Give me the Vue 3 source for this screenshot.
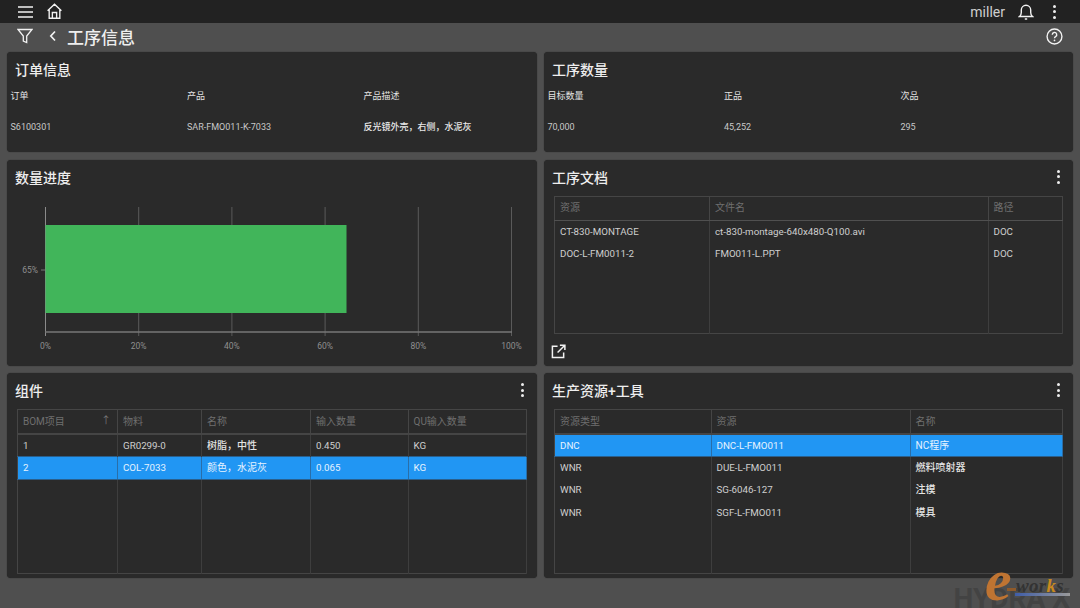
<script setup>
const orderInfo = [
  { label: '订单', value: 'S6100301' },
  { label: '产品', value: 'SAR-FMO011-K-7033' },
  { label: '产品描述', value: '反光镜外壳，右侧，水泥灰', cjk: true }
]

const qtyInfo = [
  { label: '目标数量', value: '70,000' },
  { label: '正品', value: '45,252' },
  { label: '次品', value: '295' }
]

const docTable = {
  cols: [155, 278.5, 74],
  head: ['资源', '文件名', '路径'],
  rows: [
    { cells: ['CT-830-MONTAGE', 'ct-830-montage-640x480-Q100.avi', 'DOC'] },
    { cells: ['DOC-L-FM0011-2', 'FMO011-L.PPT', 'DOC'] }
  ]
}

const bomTable = {
  cols: [100, 84, 109, 97.5, 118],
  head: ['BOM项目', '物料', '名称', '输入数量', 'QU输入数量'],
  sortFirst: true,
  rows: [
    { cells: ['1', 'GR0299-0', '树脂，中性', '0.450', 'KG'] },
    { cells: ['2', 'COL-7033', '颜色，水泥灰', '0.065', 'KG'], selected: true }
  ]
}

const resTable = {
  cols: [156.5, 199, 152],
  head: ['资源类型', '资源', '名称'],
  rows: [
    { cells: ['DNC', 'DNC-L-FMO011', 'NC程序'], selected: true },
    { cells: ['WNR', 'DUE-L-FMO011', '燃料喷射器'] },
    { cells: ['WNR', 'SG-6046-127', '注模'] },
    { cells: ['WNR', 'SGF-L-FMO011', '模具'] }
  ]
}

const cards = [
  { id: 'bom', title: '组件', table: bomTable },
  { id: 'res', title: '生产资源+工具', table: resTable }
]

const ticks = [0, 20, 40, 60, 80, 100]
const tickX = (t) => 38.5 + (t / 100) * 466
const isCjk = (s) => /[\u4e00-\u9fff]/.test(s)
</script>

<template>
  <div class="page">
    <!-- TOP BAR -->
    <header class="topbar">
      <svg class="ico menu" viewBox="0 0 16 14" width="16" height="14">
        <path d="M0 2h15M0 7h15M0 12h15" />
      </svg>
      <svg class="ico home" viewBox="0 0 16 16" width="17" height="17">
        <path d="M1.5 7.2 8 1.2l6.500 6M3 6v8.300h10V6M6 14.300V9h4v5.300" />
      </svg>
      <span class="spacer"></span>
      <span class="user">miller</span>
      <svg class="ico bell" viewBox="0 0 16 18" width="16" height="18">
        <path d="M1.500 13.500c1.300-1 1.800-2.200 1.800-4V7a4.700 4.700 0 0 1 9.400 0v2.500c0 1.800.5 3 1.800 4zM6.800 16h2.400" />
      </svg>
      <span class="kebab top"><i></i><i></i><i></i></span>
    </header>

    <!-- SUB BAR -->
    <div class="subbar">
      <svg class="ico filter" viewBox="0 0 16 16" width="16" height="16">
        <path d="M1 1.500h14L9.700 8v6.500L6.300 13V8z" />
      </svg>
      <svg class="ico back" viewBox="0 0 8 12" width="8" height="12">
        <path d="M6 1.500 1.800 6 6 10.500" />
      </svg>
      <h1 class="page-title">工序信息</h1>
      <span class="spacer"></span>
      <svg class="ico help" viewBox="0 0 16 16" width="17" height="17">
        <circle cx="8" cy="8" r="7" />
        <path d="M5.900 6.300A2.100 2.100 0 1 1 9 8.100c-.7.400-1 .8-1 1.500" />
        <circle class="dot" cx="8" cy="11.700" r=".8" />
      </svg>
    </div>

    <main class="grid">
      <!-- ORDER -->
      <section class="card">
        <div class="card-head"><h2>订单信息</h2></div>
        <div class="info">
          <div v-for="item in orderInfo" :key="item.label" class="info-col">
            <span class="info-label">{{ item.label }}</span>
            <span class="info-value" :class="{ cjk: item.cjk }">{{ item.value }}</span>
          </div>
        </div>
      </section>

      <!-- QTY -->
      <section class="card">
        <div class="card-head"><h2>工序数量</h2></div>
        <div class="info">
          <div v-for="item in qtyInfo" :key="item.label" class="info-col">
            <span class="info-label">{{ item.label }}</span>
            <span class="info-value">{{ item.value }}</span>
          </div>
        </div>
      </section>

      <!-- PROGRESS CHART -->
      <section class="card">
        <div class="card-head"><h2>数量进度</h2></div>
        <svg class="chart" viewBox="0 0 530 170" width="530" height="170">
          <g v-for="t in ticks" :key="t">
            <line :x1="tickX(t)" :x2="tickX(t)" y1="12" y2="141" :stroke="t === 0 ? '#8a8a8a' : '#5a5a5a'" />
            <text :x="tickX(t)" y="154" text-anchor="middle">{{ t }}%</text>
          </g>
          <rect x="38.500" y="30" width="301" height="88" fill="#41b55a" />
          <line x1="38" x2="505" y1="137" y2="137" stroke="#777" stroke-width="1.500" />
          <line x1="34" x2="38" y1="75" y2="75" stroke="#777" />
          <text x="31" y="78" text-anchor="end">65%</text>
        </svg>
      </section>

      <!-- DOCUMENTS -->
      <section class="card">
        <div class="card-head">
          <h2>工序文档</h2>
          <span class="kebab"><i></i><i></i><i></i></span>
        </div>
        <div class="table-wrap doc">
          <table>
            <colgroup><col v-for="(w, i) in docTable.cols" :key="i" :style="{ width: w + 'px' }" /></colgroup>
            <thead>
              <tr><th v-for="h in docTable.head" :key="h">{{ h }}</th></tr>
            </thead>
            <tbody>
              <tr v-for="(row, r) in docTable.rows" :key="r" class="row">
                <td v-for="(c, i) in row.cells" :key="i">{{ c }}</td>
              </tr>
              <tr class="filler"><td v-for="h in docTable.head" :key="h"></td></tr>
            </tbody>
          </table>
        </div>
        <svg class="ico open" viewBox="0 0 16 16" width="15" height="15">
          <path d="M7 2.500H1.500v12h12V9M9.500 1.200h5.300v5.300M14.500 1.500 7 9" />
        </svg>
      </section>

      <!-- BOM + RESOURCES -->
      <section v-for="card in cards" :key="card.id" class="card">
        <div class="card-head">
          <h2>{{ card.title }}</h2>
          <span class="kebab"><i></i><i></i><i></i></span>
        </div>
        <div class="table-wrap">
          <table class="strong">
            <colgroup><col v-for="(w, i) in card.table.cols" :key="i" :style="{ width: w + 'px' }" /></colgroup>
            <thead>
              <tr>
                <th v-for="(h, i) in card.table.head" :key="h">
                  {{ h }}
                  <span v-if="card.table.sortFirst && i === 0" class="sort">↑</span>
                </th>
              </tr>
            </thead>
            <tbody>
              <tr v-for="(row, r) in card.table.rows" :key="r" class="row" :class="{ selected: row.selected }">
                <td v-for="(c, i) in row.cells" :key="i" :class="{ cjk: isCjk(c) }">{{ c }}</td>
              </tr>
              <tr class="filler"><td v-for="h in card.table.head" :key="h"></td></tr>
            </tbody>
          </table>
        </div>
      </section>
    </main>

    <!-- WATERMARK -->
    <div class="brand">HYDRA X</div>
    <div class="eworks">
      <span class="e">e</span><span class="dash"></span><span class="works">wor<b>k</b>s</span>
      <span class="rule"></span>
    </div>
  </div>
</template>

<style scoped>
.page {
  position: relative;
  width: 1080px;
  height: 608px;
  overflow: hidden;
  background: #4f4f4f;
  color: #ddd;
  font-family: Roboto, "Noto Sans CJK SC", sans-serif;
}

.spacer { flex: 1; }

.ico {
  fill: none;
  stroke: #f2f2f2;
  stroke-width: 1.3;
  flex: none;
}

/* TOP BAR */
.topbar {
  display: flex;
  align-items: center;
  height: 23px;
  padding: 0 24px 0 18px;
  background: #222;
}

.home { margin-left: 12px; }

.user {
  font-size: 14px;
  color: #cfcfcf;
  margin-right: 13px;
}

.bell { stroke-width: 1.4; }

.kebab {
  display: flex;
  flex-direction: column;
  gap: 2.500px;
  width: 3px;
}

.kebab i {
  display: block;
  width: 3px;
  height: 3px;
  border-radius: 50%;
  background: #eee;
}

.kebab.top { margin-left: 19px; }

/* SUB BAR */
.subbar {
  display: flex;
  align-items: center;
  height: 26px;
  margin-bottom: 3px;
  padding: 0 17px;
}

.back { margin-left: 16px; stroke-width: 1.7; }

.page-title {
  margin: 0 0 0 10px;
  font-size: 17px;
  font-weight: 500;
  color: #eee;
}

.help { stroke-width: 1.3; }
.help .dot { fill: #f2f2f2; stroke: none; }

/* CARDS */
.grid {
  display: grid;
  grid-template-columns: 529.500px 529px;
  grid-template-rows: 100px 206px 205px;
  column-gap: 7.500px;
  row-gap: 7.500px;
  padding: 0 7px;
}

.card {
  display: flex;
  flex-direction: column;
  min-height: 0;
  background: #2a2a2a;
  border-radius: 4px;
  box-shadow: 0 0 1px #1c1c1c;
}

.card-head {
  display: flex;
  align-items: center;
  justify-content: space-between;
  flex: none;
  height: 34px;
  padding: 0 13px 0 8px;
  box-sizing: border-box;
}

.card-head h2 {
  margin: 0;
  font-size: 14px;
  font-weight: 500;
  color: #eee;
}

/* INFO ROWS */
.info {
  display: grid;
  grid-template-columns: repeat(3, 176.500px);
  padding: 0 3.500px;
  font-size: 9px;
}

.info-col {
  display: flex;
  flex-direction: column;
  gap: 20px;
}

.info-label { line-height: 11px; margin-top: 5px; color: #e4e4e4; }
.info-value { line-height: 11px; color: #c8c8c8; }
.info-value.cjk { color: #e8e8e8; font-weight: 500; }

/* CHART */
.chart {
  display: block;
  margin-top: 1px;
}

.chart text {
  font-size: 8.500px;
  fill: #8f8f8f;
}

/* TABLES */
.table-wrap {
  flex: 1;
  min-height: 0;
  margin: 2px 11px 4px 10px;
}

.table-wrap.doc {
  flex: none;
  height: 138px;
  margin-bottom: 0;
}

table {
  width: 100%;
  height: 100%;
  table-layout: fixed;
  border-collapse: collapse;
  border: 1px solid #454545;
  font-size: 9.750px;
}

th {
  height: 23px;
  padding: 0 5px;
  text-align: left;
  font-size: 10px;
  line-height: 12px;
  font-weight: 400;
  color: #6f6f6f;
  border-right: 1px solid #454545;
  border-bottom: 1px solid #505050;
  position: relative;
}

table.strong th { border-bottom: 2px solid #454545; }

.sort {
  position: absolute;
  right: 6px;
  top: 5px;
  color: #777;
}

td {
  padding: 0 5px;
  line-height: 12px;
  color: #cfcfcf;
  border-right: 1px solid #3e3e3e;
}

td.cjk { font-size: 10px; font-weight: 500; color: #e4e4e4; }

.doc td { padding-top: 1px; }

.row { height: 22.500px; }
.filler td { height: auto; }

.selected td {
  background: #2196f3;
  color: #e6f3ff;
  border-right-color: #2a6ea8;
  border-top: 1px solid #2a5f8c;
  border-bottom: 1px solid #2a5f8c;
}

.selected td.cjk { color: #e6f3ff; font-weight: 400; }

.open {
  margin: 10px 0 0 7px;
  stroke-width: 1.6;
}

/* WATERMARK */
.brand {
  position: absolute;
  right: 10px;
  top: 584px;
  font-size: 28px;
  line-height: 30px;
  font-weight: 700;
  color: #434343;
}

.eworks {
  position: absolute;
  left: 985px;
  top: 574px;
  width: 92px;
  height: 32px;
  font-family: "Liberation Serif", serif;
}

.e {
  position: absolute;
  left: 0;
  top: -24px;
  font-size: 60px;
  line-height: 60px;
  font-style: italic;
  font-weight: 700;
  color: #bf7432;
}

.dash {
  position: absolute;
  left: 22px;
  top: 14px;
  width: 9px;
  height: 3px;
  background: #8f5a2a;
}

.works {
  position: absolute;
  left: 31px;
  top: 3px;
  font-size: 19px;
  line-height: 18px;
  font-style: italic;
  font-weight: 700;
  letter-spacing: .3px;
  color: #333;
}

.works b { color: #c98a1e; }

.rule {
  position: absolute;
  left: 30px;
  top: 19px;
  width: 55px;
  height: 3px;
  background: linear-gradient(90deg, #3f5da8, #9a9a9a);
}
</style>

<style>
html, body {
  margin: 0;
  background: #4f4f4f;
}
</style>
